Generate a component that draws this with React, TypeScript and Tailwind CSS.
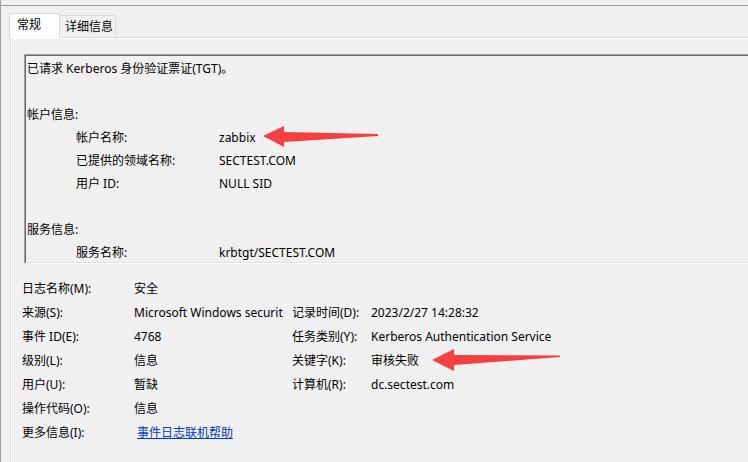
import React from 'react';

const font = {
  fontFamily: '"Noto Sans", "Noto Sans CJK SC", sans-serif',
};

type Row = { label: string; value?: React.ReactNode; label2?: string; value2?: string };

const rows: Row[] = [
  { label: '日志名称(M):', value: '安全' },
  {
    label: '来源(S):',
    value: 'Microsoft Windows security auditing.',
    label2: '记录时间(D):',
    value2: '2023/2/27 14:28:32',
  },
  {
    label: '事件 ID(E):',
    value: '4768',
    label2: '任务类别(Y):',
    value2: 'Kerberos Authentication Service',
  },
  { label: '级别(L):', value: '信息', label2: '关键字(K):', value2: '审核失败' },
  { label: '用户(U):', value: '暂缺', label2: '计算机(R):', value2: 'dc.sectest.com' },
  { label: '操作代码(O):', value: '信息' },
  {
    label: '更多信息(I):',
    value: <span className="pl-[3px] text-[#0037da] underline">事件日志联机帮助</span>,
  },
];

function Field({ label, value }: { label: string; value: string }) {
  return (
    <div className="flex h-[23px] pl-[49px]">
      <span className="w-[143px] shrink-0">{label}</span>
      <span>{value}</span>
    </div>
  );
}

function Arrows() {
  return (
    <svg className="pointer-events-none absolute inset-0" width="748" height="462">
      <polygon
        points="262,136 283,126 283,132 377,134 377,136 283,142 283,147"
        fill="#f5403f"
      />
      <polygon
        points="431,360 453,349 453,355 559,355.5 559,357 453,365 453,371"
        fill="#f5403f"
      />
    </svg>
  );
}

export default function App() {
  return (
    <div
      style={font}
      className="relative h-[462px] w-[748px] overflow-hidden border-l border-[#a0a0a0] bg-[#f0f0f0] text-[12px] text-black"
    >
      <div className="h-[5px]" />
      <div className="border-t border-[#a0a0a0] pt-[7px]">
        {/* tabs */}
        <div className="flex h-[24px] items-end pl-[8px]">
          <div className="relative z-10 -mb-[1px] h-[25px] w-[51px] border border-b-0 border-[#d9d9d9] bg-white pl-[7px] leading-[22px]">
            常规
          </div>
          <div className="h-[22px] w-[56px] border border-b-0 border-l-0 border-[#d9d9d9] bg-[#f0f0f0] pl-[5px] leading-[21px]">
            详细信息
          </div>
        </div>

        {/* panel */}
        <div className="ml-[9px] border-t border-l border-[#d9d9d9]">
          <div className="h-[430px] border-t border-l border-white pt-[15px] pl-[10px]">
            <div className="ml-[2px] w-[760px] border-t border-l border-b border-t-[#a0a0a0] border-l-[#a0a0a0] border-b-white">
              <div className="h-[208px] overflow-hidden border-t border-l border-b border-t-[#696969] border-l-[#696969] border-b-[#e3e3e3] pt-[1px] pl-[1px] leading-[23px]">
                <div className="h-[23px]">已请求 Kerberos 身份验证票证(TGT)。</div>
                <div className="h-[23px]" />
                <div className="h-[23px]">帐户信息:</div>
                <Field label="帐户名称:" value="zabbix" />
                <Field label="已提供的领域名称:" value="SECTEST.COM" />
                <Field label="用户 ID:" value="NULL SID" />
                <div className="h-[23px]" />
                <div className="h-[23px]">服务信息:</div>
                <Field label="服务名称:" value="krbtgt/SECTEST.COM" />
                <Field label="服务 ID:" value="S-1-5-21-0000000000-000000000-0000000000-502" />
              </div>
            </div>

            <div className="mt-[13px] leading-[24px]">
              {rows.map((r) => (
                <div key={r.label} className="flex h-[24px]">
                  <span className="w-[112px] shrink-0 whitespace-nowrap">{r.label}</span>
                  <span className="w-[149px] shrink-0 overflow-hidden whitespace-nowrap">{r.value}</span>
                  {r.label2 && (
                    <>
                      <span className="ml-[9px] w-[79px] shrink-0 whitespace-nowrap">{r.label2}</span>
                      <span className="whitespace-nowrap">{r.value2}</span>
                    </>
                  )}
                </div>
              ))}
            </div>
          </div>
        </div>
      </div>
      <Arrows />
    </div>
  );
}
